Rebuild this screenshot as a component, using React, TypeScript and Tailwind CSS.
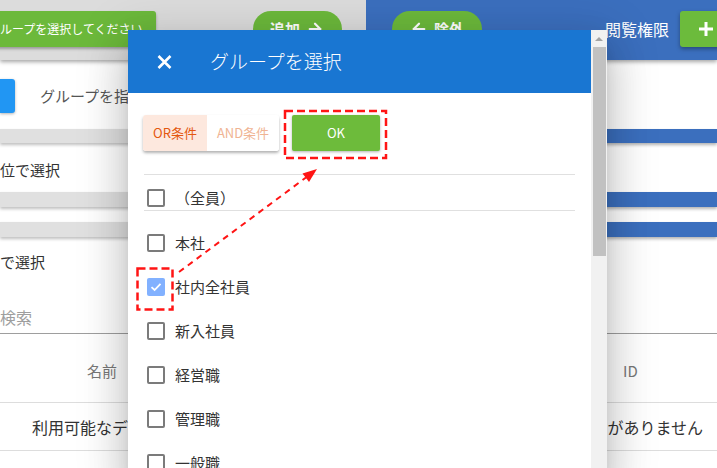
import { ArrowLeft, ArrowRight } from 'lucide-react';

const groups = ['本社', '社内全社員', '新入社員', '経営職', '管理職', '一般職', '契約社員'];

function CheckBox({ checked }: { checked?: boolean }) {
  if (checked) {
    return (
      <span className="ml-[3px] flex h-[18px] w-[18px] shrink-0 items-center justify-center rounded-[2px] bg-[#82b1ff]">
        <svg width="12" height="10" viewBox="0 0 12 10">
          <path d="M1.5 5.2 4.6 8 10.5 1.8" fill="none" stroke="#fff" strokeWidth="1.8" />
        </svg>
      </span>
    );
  }
  return <span className="ml-[3px] h-[18px] w-[18px] shrink-0 rounded-[2px] border-2 border-[#7b7b7b]" />;
}

function LeftPanel() {
  return (
    <div className="flex w-[366px] shrink-0 flex-col overflow-hidden">
      <div className="relative z-10 flex h-[60px] shrink-0 items-start bg-[#dcdcdc] pt-[11px] shadow-[0_2px_4px_rgba(0,0,0,0.35)]">
        <div className="ml-[-30px] flex h-[36px] shrink-0 items-center whitespace-nowrap rounded-r-[3px] bg-[#6cb93b] pl-[18px] pr-[13px] text-[12px] text-white shadow-[0_2px_3px_rgba(0,0,0,0.3)]">
          グループを選択してください
        </div>
        <div className="ml-[97px] flex h-[36px] w-[89px] shrink-0 items-center justify-center gap-[6px] rounded-full bg-[#6cb93b] text-[15px] font-bold text-white">
          追加
          <ArrowRight size={18} strokeWidth={3} />
        </div>
      </div>
      <div className="mt-[19px] flex h-[34px] items-center">
        <div className="h-[34px] w-[15px] rounded-r-[3px] bg-[#2196f3] shadow-[0_1px_3px_rgba(0,0,0,0.3)]" />
        <span className="ml-[25px] whitespace-nowrap text-[15px] text-[#555]">グループを指定して選択</span>
      </div>
      <div className="mt-[16px] h-[14px] bg-[#e0e0e0] shadow-[0_2px_3px_rgba(0,0,0,0.25)]" />
      <div className="flex h-[49px] items-center pt-[5px]">
        <span className="ml-[-15px] whitespace-nowrap text-[15px]">単位で選択</span>
      </div>
      <div className="h-[15px] bg-[#e0e0e0] shadow-[0_2px_3px_rgba(0,0,0,0.25)]" />
      <div className="h-[15px]" />
      <div className="h-[15px] bg-[#e0e0e0] shadow-[0_2px_3px_rgba(0,0,0,0.25)]" />
      <div className="flex h-[50px] items-center">
        <span className="ml-[-30px] whitespace-nowrap text-[15px]">個別で選択</span>
      </div>
      <div className="flex h-[47px] items-center border-b border-[#9e9e9e] pt-[14px]">
        <span className="text-[16px] text-[#9e9e9e]">検索</span>
      </div>
      <div className="flex h-[69px] items-center border-b border-[#dddddd] pl-[87px] pt-[6px]">
        <span className="text-[15px] text-[#777]">名前</span>
      </div>
      <div className="flex h-[48px] items-center border-b border-[#dddddd] pl-[32px]">
        <span className="whitespace-nowrap text-[16px]">利用可能なデータ</span>
      </div>
    </div>
  );
}

function RightPanel() {
  return (
    <div className="flex flex-1 flex-col overflow-hidden">
      <div className="relative z-10 flex h-[60px] shrink-0 items-start bg-[#3b6fbe] pt-[11px] shadow-[0_2px_4px_rgba(0,0,0,0.35)]">
        <div className="ml-[26px] flex h-[36px] w-[90px] shrink-0 items-center justify-center gap-[6px] rounded-full bg-[#6cb93b] text-[15px] font-bold text-white">
          <ArrowLeft size={18} strokeWidth={3} />
          除外
        </div>
        <span className="ml-[123px] mt-[9px] whitespace-nowrap text-[16px] leading-[18px] text-white">閲覧権限</span>
        <div className="ml-[11px] flex h-[36px] w-[52px] shrink-0 items-center justify-center rounded-[3px] bg-[#6cbb3c] shadow-[0_2px_4px_rgba(0,0,0,0.35)]">
          <svg width="16" height="16" viewBox="0 0 16 16">
            <path d="M8 1v14M1 8h14" stroke="#fff" strokeWidth="3" />
          </svg>
        </div>
      </div>
      <div className="mt-[69px] h-[14px] bg-[#3b6fbe] shadow-[0_2px_3px_rgba(0,0,0,0.3)]" />
      <div className="h-[49px]" />
      <div className="h-[15px] bg-[#3b6fbe] shadow-[0_2px_3px_rgba(0,0,0,0.3)]" />
      <div className="h-[15px]" />
      <div className="h-[15px] bg-[#3b6fbe] shadow-[0_2px_3px_rgba(0,0,0,0.3)]" />
      <div className="h-[50px]" />
      <div className="h-[47px] border-b border-[#9e9e9e]" />
      <div className="flex h-[69px] items-center border-b border-[#dddddd] pl-[257px] pt-[6px]">
        <span className="text-[15px] text-[#777]">ID</span>
      </div>
      <div className="flex h-[48px] items-center justify-end border-b border-[#dddddd] pr-[14px]">
        <span className="whitespace-nowrap text-[16px]">データがありません</span>
      </div>
    </div>
  );
}

function GroupDialog() {
  return (
    <div className="absolute left-[128px] top-[30px] z-20 flex h-[450px] w-[479px] bg-white shadow-[0_11px_15px_-7px_rgba(0,0,0,0.2),0_24px_38px_3px_rgba(0,0,0,0.14),0_9px_46px_8px_rgba(0,0,0,0.12)]">
      <div className="flex w-[463px] flex-col overflow-hidden">
        <div className="flex h-[63px] shrink-0 items-center bg-[#1976d2] text-white">
          <svg className="ml-[29px]" width="15" height="14" viewBox="0 0 15 14">
            <path d="M1.5 1 13.5 13M13.5 1 1.5 13" stroke="#fff" strokeWidth="2.6" />
          </svg>
          <span className="ml-[38px] text-[19px] font-light">グループを選択</span>
        </div>
        <div className="px-[16px] pt-[22px]">
          <div className="flex items-center">
            <div className="ml-[-1px] flex h-[36px] overflow-hidden rounded-[3px] text-[13px] shadow-[0_2px_3px_rgba(0,0,0,0.3)]">
              <span className="flex w-[64px] items-center justify-center bg-[#fde8de] text-[#e4570f]">OR条件</span>
              <span className="flex w-[72px] items-center justify-center bg-white text-[#f0b493]">AND条件</span>
            </div>
            <button className="ml-[13px] h-[36px] w-[88px] rounded-[2px] bg-[#6dbb3b] text-[13px] text-white shadow-[0_1px_3px_rgba(0,0,0,0.3)]">
              OK
            </button>
          </div>
          <div className="mt-[23px] border-t border-[#e0e0e0]" />
          <div className="flex h-[36px] items-start border-b border-[#e0e0e0] pt-[14px]">
            <CheckBox />
            <span className="ml-[10px] text-[15px] leading-[18px]">（全員）</span>
          </div>
          <div className="pt-[10px]">
            {groups.map((g) => (
              <div key={g} className="flex h-[44px] items-center">
                <CheckBox checked={g === '社内全社員'} />
                <span className="ml-[10px] text-[15px]">{g}</span>
              </div>
            ))}
          </div>
        </div>
      </div>
      <div className="flex w-[16px] flex-col items-center bg-[#f1f1f1]">
        <svg className="mt-[7px]" width="8" height="4" viewBox="0 0 8 4">
          <polygon points="0,4 4,0 8,4" fill="#a3a3a3" />
        </svg>
        <div className="mt-[6px] h-[209px] w-[13px] bg-[#c1c1c1]" />
      </div>
    </div>
  );
}

export default function App() {
  return (
    <div className="relative h-[468px] w-[717px] overflow-hidden bg-white font-['Noto_Sans_CJK_JP','Noto_Sans',sans-serif] text-[#333]">
      <div className="flex h-full">
        <LeftPanel />
        <RightPanel />
      </div>
      <GroupDialog />
      {/* red annotation marks */}
      <svg className="pointer-events-none absolute left-0 top-0 z-30" width="717" height="468">
        <rect x="285" y="111" width="101" height="47" fill="none" stroke="#ff1414" strokeWidth="2.5" strokeDasharray="8 4" />
        <rect x="137.5" y="268.5" width="35" height="41" fill="none" stroke="#ff1414" strokeWidth="2.5" strokeDasharray="8 4" />
        <line x1="179" y1="272" x2="306" y2="177.5" stroke="#ff1414" strokeWidth="2" strokeDasharray="6 5" />
        <polygon points="317,169 302.5,173.5 309,182" fill="#ff1414" />
      </svg>
    </div>
  );
}
